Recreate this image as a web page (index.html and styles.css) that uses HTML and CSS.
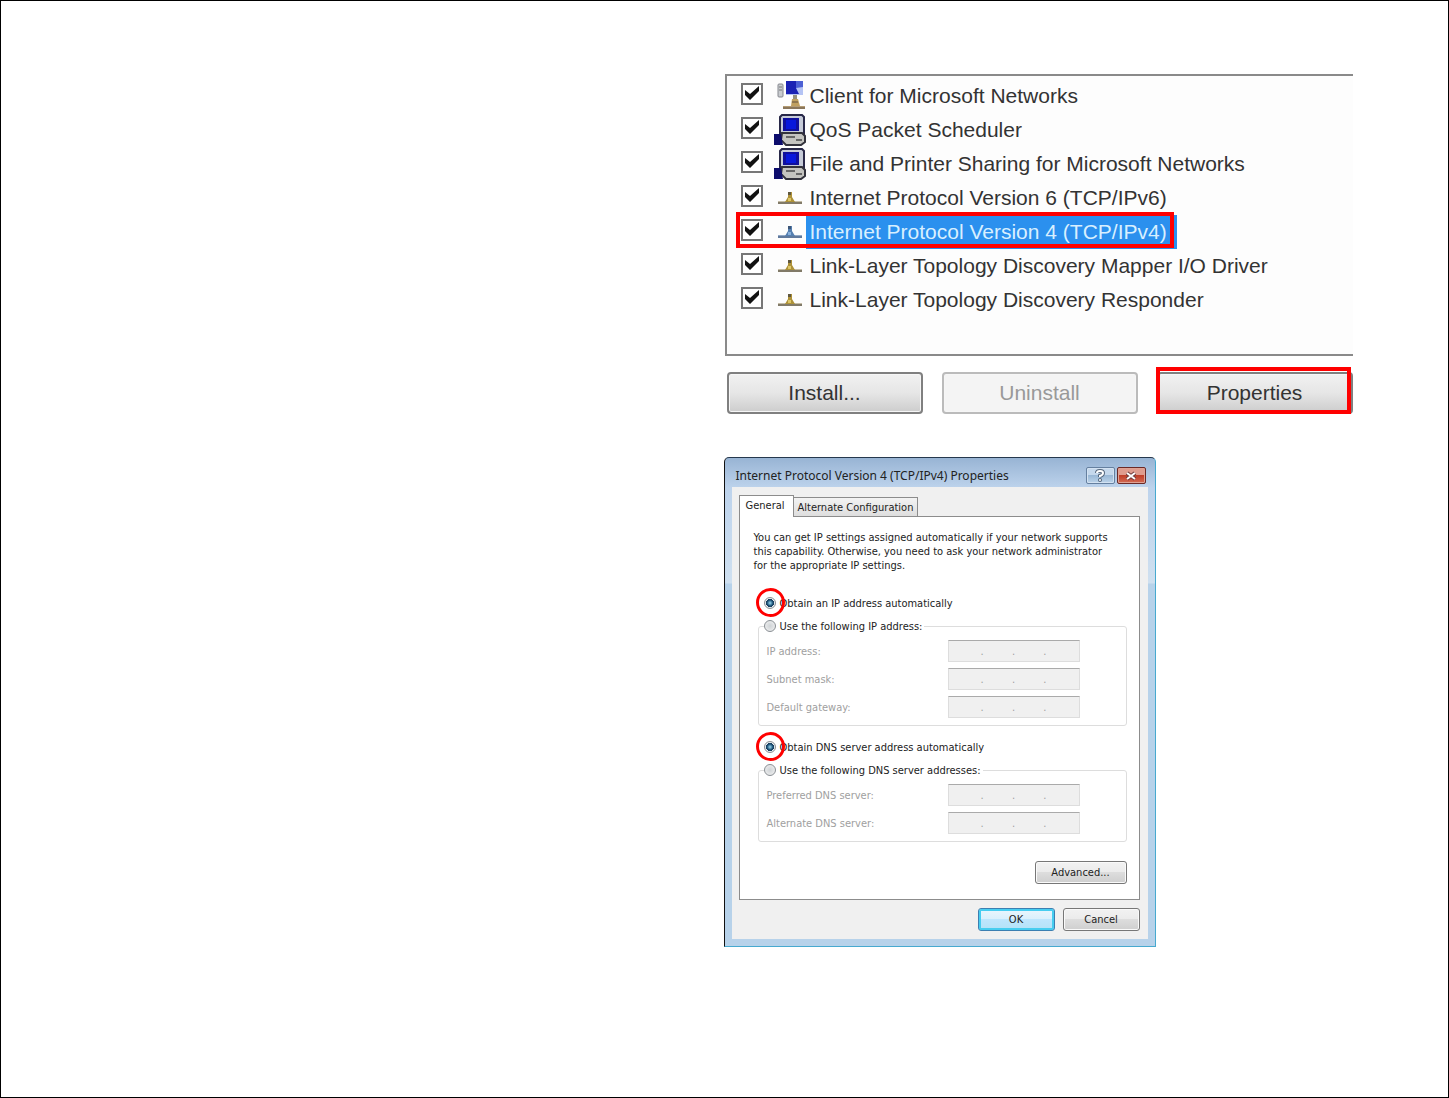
FILE: index.html
```html
<!DOCTYPE html>
<html lang="en">
<head>
    <meta charset="utf-8">
    <title>TCP/IPv4 settings</title>
    <link rel="stylesheet" href="styles.css">
</head>
<body>

<!-- shared icons -->
<svg class="defs" width="0" height="0">
    <symbol id="icon-client" viewBox="0 0 32 32">
        <rect x="4" y="4" width="5" height="13" rx="1" fill="#c9ccd0" stroke="#85878e"/>
        <path d="M5 7h3M5 10h3" stroke="#777"/>
        <path d="M12 1h17v14H12z" fill="#b4c3f4"/>
        <path d="M12 1h11l-1 7 3 6H12z" fill="#1a22b4"/>
        <path d="M22 1h7v6l-7 1z" fill="#4c60d4"/>
        <path d="M19 15h4v5h-4z" fill="#96927e"/>
        <path d="M18 19h6l2 7h-9z" fill="#c0a060"/>
        <path d="M9 26h22v3H9z" fill="#b49c74"/>
        <path d="M9 28h22M18 22h6" stroke="#605040"/>
    </symbol>
    <symbol id="icon-computer" viewBox="0 0 32 32">
        <path d="M8 1h20l2 2v17H6V3z" fill="#c6cbd8" stroke="#282848" stroke-width="2"/>
        <path d="M9 4h16v13H9z" fill="#10109c"/>
        <path d="M12 6h10v9H12z" fill="#0818dc"/>
        <path d="M8 19h20l3 3v6l-4 3H12l-5-5z" fill="#c4c4c0" stroke="#33333c" stroke-width="2"/>
        <path d="M12 23h9M22 26h6" stroke="#666" stroke-width="2"/>
        <path d="M0 20h7l2 11H0z" fill="#0c0c6c"/>
    </symbol>
    <symbol id="icon-protocol" viewBox="0 0 32 32">
        <path d="M4 19h24v3H4z" fill="#c5bda7"/>
        <path d="M4 21h24" stroke="#817a68" stroke-width="2"/>
        <path d="M14 10h4v5l3 5H11l3-5z" fill="#ad9138"/>
        <path d="M14 10h3v3h-3z" fill="#60583e"/>
        <path d="M14 16h3v3h-3z" fill="#ddc666"/>
    </symbol>
    <symbol id="icon-protocol-blue" viewBox="0 0 32 32">
        <path d="M4 19h24v3H4z" fill="#93a9c6"/>
        <path d="M4 21h24" stroke="#60799c" stroke-width="2"/>
        <path d="M14 10h4v5l3 5H11l3-5z" fill="#557fb0"/>
        <path d="M14 10h3v3h-3z" fill="#3c5678"/>
        <path d="M14 16h3v3h-3z" fill="#8ab1dc"/>
    </symbol>
</svg>

<div class="page">
    <main class="figures">

        <section class="connection">
            <div class="item-list">
                <label class="item">
                    <input type="checkbox" checked>
                    <svg class="icon"><use href="#icon-client"/></svg>
                    <span class="name">Client for Microsoft Networks</span>
                </label>
                <label class="item">
                    <input type="checkbox" checked>
                    <svg class="icon"><use href="#icon-computer"/></svg>
                    <span class="name">QoS Packet Scheduler</span>
                </label>
                <label class="item">
                    <input type="checkbox" checked>
                    <svg class="icon"><use href="#icon-computer"/></svg>
                    <span class="name">File and Printer Sharing for Microsoft Networks</span>
                </label>
                <label class="item">
                    <input type="checkbox" checked>
                    <svg class="icon"><use href="#icon-protocol"/></svg>
                    <span class="name">Internet Protocol Version 6 (TCP/IPv6)</span>
                </label>
                <label class="item selected">
                    <input type="checkbox" checked>
                    <svg class="icon"><use href="#icon-protocol-blue"/></svg>
                    <span class="name">Internet Protocol Version 4 (TCP/IPv4)</span>
                </label>
                <label class="item">
                    <input type="checkbox" checked>
                    <svg class="icon"><use href="#icon-protocol"/></svg>
                    <span class="name">Link-Layer Topology Discovery Mapper I/O Driver</span>
                </label>
                <label class="item">
                    <input type="checkbox" checked>
                    <svg class="icon"><use href="#icon-protocol"/></svg>
                    <span class="name">Link-Layer Topology Discovery Responder</span>
                </label>
            </div>
            <div class="item-actions">
                <button type="button">Install...</button>
                <button type="button" disabled>Uninstall</button>
                <div class="marked">
                    <button type="button">Properties</button>
                </div>
            </div>
        </section>

        <section class="dialog">
            <header class="titlebar">
                <h1>Internet Protocol Version 4 (TCP/IPv4) Properties</h1>
                <button type="button" class="help" aria-label="Help">
                    <svg width="12" height="13" viewBox="0 0 12 13">
                        <path d="M3 4q0-2 3-2t3 2q0 2-3 3v1" fill="none" stroke="#56677c" stroke-width="4"/>
                        <circle cx="6" cy="11" r="2" fill="#56677c"/>
                        <path d="M3 4q0-2 3-2t3 2q0 2-3 3v1" fill="none" stroke="#fff" stroke-width="2"/>
                        <circle cx="6" cy="11" r="1" fill="#fff"/>
                    </svg>
                </button>
                <button type="button" class="close" aria-label="Close">
                    <svg width="12" height="10" viewBox="0 0 12 10">
                        <path d="M2 2l8 6M10 2l-8 6" stroke="#6d3a3a" stroke-width="4"/>
                        <path d="M2 2l8 6M10 2l-8 6" stroke="#fff" stroke-width="2"/>
                    </svg>
                </button>
            </header>

            <form class="client">
                <div class="tabs">
                    <button type="button" class="tab active">General</button>
                    <button type="button" class="tab">Alternate Configuration</button>
                </div>

                <div class="panel">
                    <p>You can get IP settings assigned automatically if your network supports this capability. Otherwise, you need to ask your network administrator for the appropriate IP settings.</p>

                    <label class="option circled"><input type="radio" name="ip" checked> Obtain an IP address automatically</label>
                    <fieldset>
                        <legend><label class="option"><input type="radio" name="ip"> Use the following IP address:</label></legend>
                        <div class="field">
                            <label for="ip-address">IP address:</label>
                            <input type="text" id="ip-address" value=".         .         ." disabled>
                        </div>
                        <div class="field">
                            <label for="subnet">Subnet mask:</label>
                            <input type="text" id="subnet" value=".         .         ." disabled>
                        </div>
                        <div class="field">
                            <label for="gateway">Default gateway:</label>
                            <input type="text" id="gateway" value=".         .         ." disabled>
                        </div>
                    </fieldset>

                    <label class="option circled"><input type="radio" name="dns" checked> Obtain DNS server address automatically</label>
                    <fieldset>
                        <legend><label class="option"><input type="radio" name="dns"> Use the following DNS server addresses:</label></legend>
                        <div class="field">
                            <label for="dns1">Preferred DNS server:</label>
                            <input type="text" id="dns1" value=".         .         ." disabled>
                        </div>
                        <div class="field">
                            <label for="dns2">Alternate DNS server:</label>
                            <input type="text" id="dns2" value=".         .         ." disabled>
                        </div>
                    </fieldset>

                    <button type="button" class="btn advanced">Advanced...</button>
                </div>

                <div class="dialog-actions">
                    <button type="button" class="btn default">OK</button>
                    <button type="button" class="btn">Cancel</button>
                </div>
            </form>
        </section>

    </main>
</div>

</body>
</html>
```
FILE: styles.css
```css
*, *::after {
    box-sizing: border-box;
}

body {
    margin: 0;
    background: #fff;
    color: #222;
    font-family: "DejaVu Sans Condensed", "DejaVu Sans", sans-serif;
    font-size: 11px;
}

button, input {
    font: inherit;
    color: inherit;
}

.defs {
    position: absolute;
}

.page {
    min-height: 100vh;
    border: 1px solid #000;
    padding: 73px 95px 73px calc(50% - 2px);
}

/* network connection items */
.connection {
    overflow: hidden;
    font-family: "Liberation Sans", Arial, sans-serif;
    font-size: 21px;
}

.item-list {
    border: 2px solid #8a8a8a;
    border-right: none;
    padding: 3px 0 37px 14px;
    background: #fdfdfd;
    margin-left: 1px;
}

.item {
    position: relative;
    display: flex;
    align-items: center;
    width: fit-content;
    height: 34px;
    color: #333;
}

.item input {
    appearance: none;
    width: 22px;
    height: 22px;
    margin: 0 11px 5px 0;
    border: 2px solid #777;
    background: #fff;
}

.item input:checked {
    background: #fff url("data:image/svg+xml,%3Csvg xmlns='http://www.w3.org/2000/svg' viewBox='0 0 18 18'%3E%3Cpath d='M2 5l5 4 9-8v5l-9 9-5-5z' fill='%23111'/%3E%3C/svg%3E");
}

.icon {
    width: 32px;
    height: 32px;
}

.name {
    line-height: 34px;
    padding: 0 10px 0 4px;
}

.selected .name {
    background: #2b90ee;
    color: #d8efff;
}

.selected::after {
    content: "";
    position: absolute;
    inset: -3px 3px 1px -5px;
    border: 4px solid #f00;
}

.item-actions {
    display: flex;
    gap: 19px;
    padding: 16px 0 0 3px;
}

.item-actions button {
    flex: none;
    width: 196px;
    height: 42px;
    border: 2px solid #808080;
    border-radius: 4px;
    background: linear-gradient(#f1f1f1, #e6e6e6 50%, #cdcdcd);
    box-shadow: inset 0 0 0 1px #f6f6f6;
    color: #333;
}

.item-actions button:disabled {
    border-color: #bbb;
    background: #f4f4f4;
    color: #999;
}

.marked {
    position: relative;
}

.marked::after {
    content: "";
    position: absolute;
    inset: -5px 2px 0 -1px;
    border: 4px solid #f00;
}

/* properties dialog */
.dialog {
    width: 432px;
    margin-top: 43px;
    border: 1px solid #47a9cf;
    border-top-color: #26384d;
    border-left-color: #111;
    border-radius: 5px 5px 0 0;
    padding: 0 7px 7px;
    background: linear-gradient(#98b4d4, #bdd3ec 30px, #cfe0f0 125px, #b7d2ea 126px);
}

.titlebar {
    display: flex;
    align-items: center;
    height: 29px;
    padding: 6px 2px 0 4px;
}

.titlebar h1 {
    flex: 1;
    margin: 0;
    font-family: "Noto Sans", sans-serif;
    font-size: 12px;
    font-weight: normal;
    line-height: 16px;
}

.titlebar button {
    display: flex;
    align-items: center;
    justify-content: center;
    width: 29px;
    height: 17px;
    padding: 0;
    border: 1px solid #6580a0;
    border-radius: 2px;
    background: linear-gradient(#c5d8ec 50%, #9ab8d6 50%, #bcd4ea);
    box-shadow: inset 0 0 0 1px #d3e2f2;
}

.titlebar .close {
    margin-left: 2px;
    border-color: #6b2926;
    background: linear-gradient(#df9c8e 45%, #c03e28 50%, #d36b54);
    box-shadow: inset 0 0 0 1px #dfa294;
}

.client {
    padding: 8px 8px 8px 7px;
    background: #f0f0f0;
}

.tabs {
    display: flex;
    align-items: flex-end;
}

.tab {
    height: 19px;
    padding: 0 4px;
    border: 1px solid #8c8c8c;
    border-left: none;
    border-bottom: none;
    background: linear-gradient(#f3f3f3, #dedede);
}

.tab.active {
    height: 22px;
    padding: 0 8px 2px 6px;
    margin-bottom: -1px;
    border-left: 1px solid #8c8c8c;
    background: #fff;
    z-index: 1;
}

.panel {
    display: flex;
    flex-direction: column;
    border: 1px solid #8c8c8c;
    padding: 14px 12px 15px 14px;
    background: #fff;
}

.panel p {
    margin: 0 0 23px;
    padding-right: 14px;
    line-height: 14px;
}

.option {
    position: relative;
    display: flex;
    align-items: center;
    gap: 4px;
    height: 14px;
}

.option input {
    appearance: none;
    width: 12px;
    height: 12px;
    margin: 0;
    border: 1px solid #8a8f94;
    border-radius: 50%;
    background: radial-gradient(#cfd3d6, #f4f4f4);
}

.option input:checked {
    background: radial-gradient(#9bdcf5, #164a70 3px, #1b3c58 4px, #e8eef2 4px);
}

.panel > .option {
    padding-left: 10px;
}

.circled::after {
    content: "";
    position: absolute;
    left: 2px;
    top: -8px;
    width: 29px;
    height: 29px;
    border: 3px solid #f00;
    border-radius: 50%;
}

fieldset {
    display: flex;
    flex-direction: column;
    gap: 6px;
    margin: 9px 0 14px 4px;
    border: 1px solid #ddd;
    border-radius: 3px;
    padding: 7px 46px 7px 8px;
}

legend {
    padding: 0 2px 0 0;
    margin-left: -3px;
}

.field {
    display: flex;
    align-items: center;
    justify-content: space-between;
    height: 22px;
    color: #a0a0a0;
}

.field input {
    width: 132px;
    height: 22px;
    border: 1px solid #ddd;
    border-top-color: #aaa;
    padding: 0;
    background: #f0f0f0;
    text-align: center;
}

.btn {
    width: 77px;
    height: 23px;
    padding: 0;
    border: 1px solid #777;
    border-radius: 3px;
    background: linear-gradient(#f2f2f2, #ebebeb 50%, #dddddd 50%, #cfcfcf);
    box-shadow: inset 0 0 0 1px #fafafa;
}

.btn.advanced {
    align-self: flex-end;
    width: 92px;
    margin-top: 5px;
}

.btn.default {
    border-color: #3c7fb1;
    background: linear-gradient(#eaf6fd, #d9f0fc 50%, #bee6fd 50%, #b3e2f7);
    box-shadow: inset 0 0 0 2px #46cdf0;
}

.dialog-actions {
    display: flex;
    justify-content: flex-end;
    gap: 8px;
    padding-top: 8px;
}
```
